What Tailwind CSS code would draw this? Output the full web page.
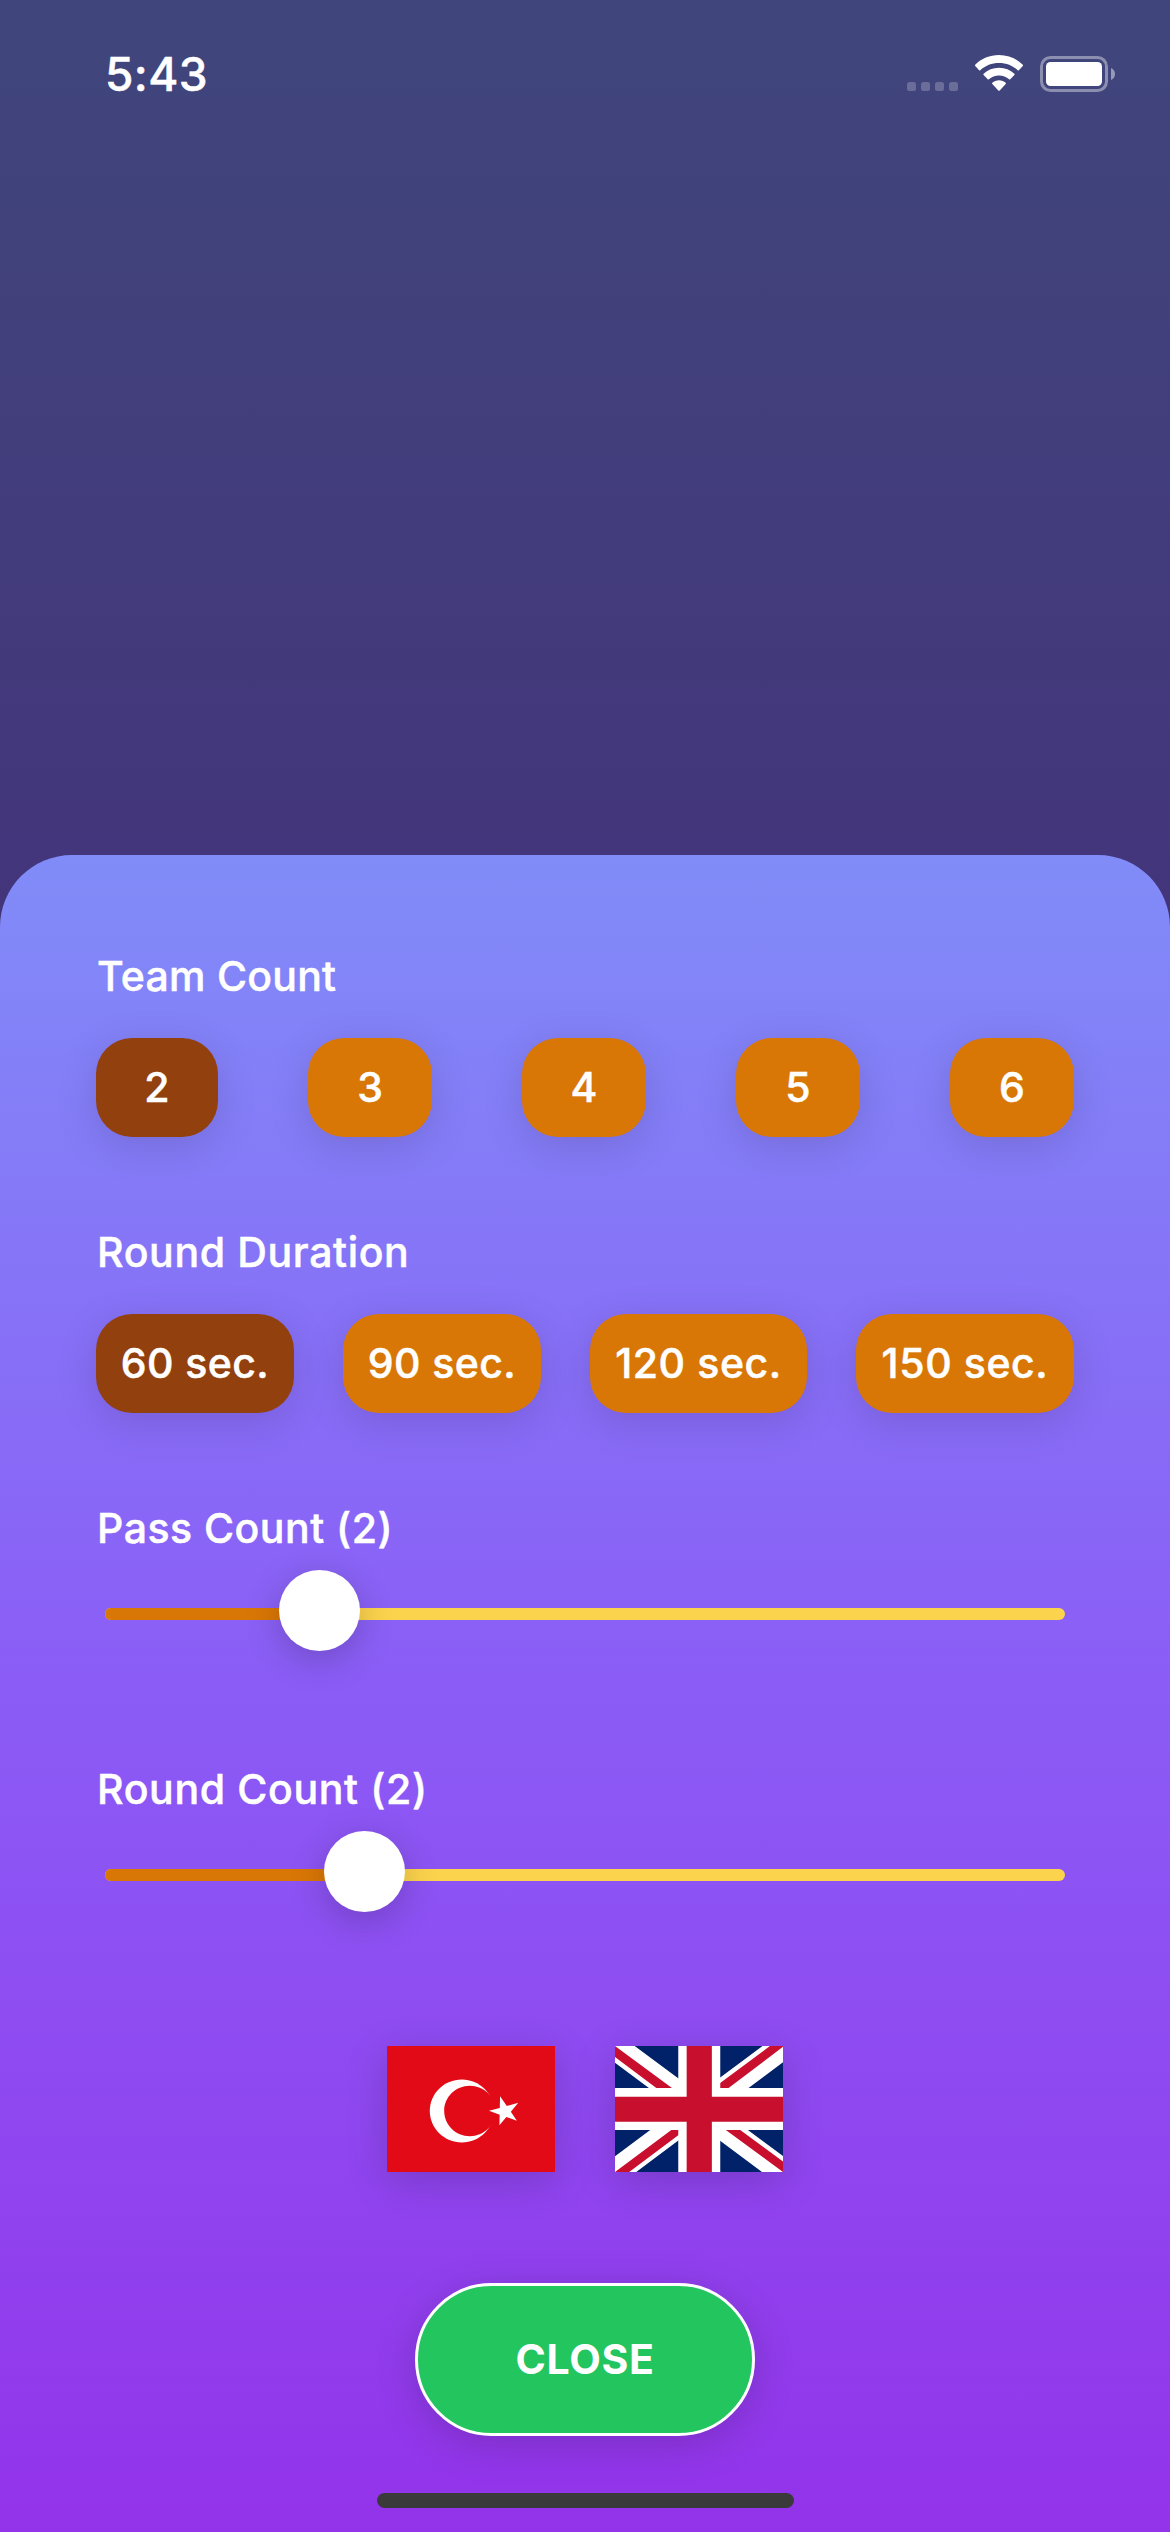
<!DOCTYPE html>
<html lang="en">
<head>
<meta charset="utf-8">
<title>Game Settings</title>
<script src="https://cdn.jsdelivr.net/npm/@tailwindcss/browser@4"></script>
</head>
<body>
<div class="flex h-[2532px] w-[1170px] flex-col overflow-hidden bg-linear-to-b/srgb from-[#40467c] via-[#452e7b] to-[#491975] font-[Inter,sans-serif] text-[41px] font-medium text-white [-webkit-text-stroke:0.5px_white]">
  <header class="flex h-[855px] shrink-0 items-start justify-between pl-[105px] pr-[55px] pt-[45px]">
    <div class="text-[46px] leading-[59px] tracking-[0.4px]">5:43</div>
    <svg class="mt-[5px] h-[50px] w-[208px]" viewBox="907 50 208 50" fill="#fff">
      <g opacity=".22"><rect x="907" y="82" width="9" height="9" rx="2.5"/><rect x="921" y="82" width="9" height="9" rx="2.5"/><rect x="935" y="82" width="9" height="9" rx="2.5"/><rect x="949" y="82" width="9" height="9" rx="2.5"/></g>
      <path d="M999 55C989.800 55 981.300 58.600 975.200 64.700Q974.600 65.300 975.200 65.900L979.100 70.200Q979.700 70.700 980.300 70.200C985.200 65.600 991.800 63 999 63S1012.800 65.600 1017.700 70.200Q1018.300 70.700 1018.900 70.200L1022.800 65.900Q1023.400 65.300 1022.800 64.700C1016.700 58.600 1008.200 55 999 55Z"/>
      <path d="M999 67.800C993 67.800 987.600 70 983.600 73.800Q983 74.400 983.600 75L987.700 79.300Q988.300 79.800 988.900 79.300C991.600 76.900 995.100 75.500 999 75.500S1006.400 76.900 1009.100 79.300Q1009.700 79.800 1010.300 79.300L1014.400 75Q1015 74.400 1014.400 73.800C1010.400 70 1005 67.800 999 67.800Z"/>
      <path d="M999 80.200C996.400 80.200 994.100 81.200 992.300 82.700Q991.700 83.400 992.300 84L998.300 90.400Q999 91.100 999.700 90.400L1005.700 84Q1006.300 83.400 1005.700 82.700C1003.900 81.200 1001.600 80.200 999 80.200Z"/>
      <rect x="1041.500" y="57.500" width="65" height="33" rx="9" fill="none" stroke="#fff" stroke-opacity=".4" stroke-width="3"/>
      <rect x="1046" y="62" width="56" height="24" rx="4.500"/>
      <path d="M1111 68C1113.500 69 1115 71.300 1115 74S1113.500 79 1111 80Z" opacity=".45"/>
    </svg>
  </header>

  <main class="flex h-[1677px] flex-col rounded-t-[72px] bg-linear-to-b/srgb from-[#818cf8] via-[#8b5cf6] to-[#9333ea] px-24 pt-[91px]">
    <h2 class="ml-px h-[60px] leading-[60px]"><span class="tracking-[0.25px]">Team Count</span></h2>
    <div class="mt-8 flex h-[99px] justify-between leading-[99px] *:rounded-[36px] *:text-center *:shadow-[0_9px_42px_rgba(0,0,0,0.13)]">
      <button class="w-[122px] bg-[#92400e]">2</button>
      <button class="w-[124px] bg-[#d97706]">3</button>
      <button class="w-[124px] bg-[#d97706]">4</button>
      <button class="w-[124px] bg-[#d97706]">5</button>
      <button class="w-[124px] bg-[#d97706]">6</button>
    </div>

    <h2 class="ml-px mt-[85px] h-[60px] leading-[60px]"><span class="tracking-[0.65px]">Round Duration</span></h2>
    <div class="mt-8 flex h-[99px] justify-between whitespace-nowrap leading-[99px] tracking-[0.4px] *:rounded-[36px] *:text-center *:shadow-[0_9px_42px_rgba(0,0,0,0.13)]">
      <button class="w-[198px] bg-[#92400e]">60 sec.</button>
      <button class="w-[198px] bg-[#d97706]">90 sec.</button>
      <button class="w-[217px] bg-[#d97706] tracking-[0.6px]">120 sec.</button>
      <button class="w-[218px] bg-[#d97706] tracking-[0.6px]">150 sec.</button>
    </div>

    <h2 class="ml-px mt-[85px] h-[60px] leading-[60px]"><span class="tracking-[0.5px]">Pass Count (2)</span></h2>
    <div class="relative mx-[9px] mt-3 h-[81px] pt-[38px]">
      <div class="flex h-3 overflow-hidden rounded-full bg-[#fcd34d]"><div class="w-[214px] bg-[#d97706]"></div></div>
      <div class="absolute left-[174px] top-0 size-[81px] rounded-full bg-white shadow-[0_9px_36px_rgba(0,0,0,0.2)]"></div>
    </div>

    <h2 class="ml-px mt-[108px] h-[60px] leading-[60px]"><span class="tracking-[0.65px]">Round Count (2)</span></h2>
    <div class="relative mx-[9px] mt-3 h-[81px] pt-[38px]">
      <div class="flex h-3 overflow-hidden rounded-full bg-[#fcd34d]"><div class="w-[259px] bg-[#d97706]"></div></div>
      <div class="absolute left-[219px] top-0 size-[81px] rounded-full bg-white shadow-[0_9px_36px_rgba(0,0,0,0.2)]"></div>
    </div>

    <div class="mt-[134px] flex justify-center gap-[60px] *:h-[126px] *:w-[168px] *:shadow-[0_9px_42px_rgba(0,0,0,0.17)]">
      <svg viewBox="0 0 640 480"><path fill="#e30a17" d="M0 0h640v480H0z"/><path fill="#fff" d="M407 247.500c0 66.200-54.600 119.900-122 119.900s-122-53.700-122-120 54.600-119.800 122-119.800 122 53.700 122 119.900z"/><path fill="#e30a17" d="M413 247.500c0 53-43.600 95.900-97.500 95.900s-97.600-43-97.600-96 43.700-95.800 97.600-95.800 97.600 42.900 97.600 95.900z"/><path fill="#fff" d="m430.700 191.500-1 44.300-41.300 11.200 40.800 14.500-1 40.700 26.500-31.800 40.200 14-23.200-34.100 28.300-33.900-43.500 12-25.800-37z"/></svg>
      <svg viewBox="0 0 640 480"><path fill="#012169" d="M0 0h640v480H0z"/><path fill="#fff" d="m75 0 244 181L562 0h78v62L400 241l240 178v61h-80L320 301 81 480H0v-60l239-178L0 64V0z"/><path fill="#c8102e" d="m424 281 216 159v40L369 281zm-184 20 6 35L54 480H0zM640 0v3L391 191l2-44L590 0zM0 0l239 176h-60L0 42z"/><path fill="#fff" d="M241 0v480h160V0zM0 160v160h640V160z"/><path fill="#c8102e" d="M0 193v96h640v-96zM273 0v480h96V0z"/></svg>
    </div>

    <button class="mt-[111px] h-[153px] w-[340px] shrink-0 self-center rounded-full border-[3px] border-white bg-[#22c55e] text-center font-bold tracking-[0.7px] shadow-[0_9px_42px_rgba(0,0,0,0.17)] [-webkit-text-stroke:0]">CLOSE</button>
    <div class="ml-[281px] mt-[57px] h-[15px] w-[417px] shrink-0 rounded-full bg-[#3a3a3a]"></div>
  </main>
</div>
</body>
</html>
